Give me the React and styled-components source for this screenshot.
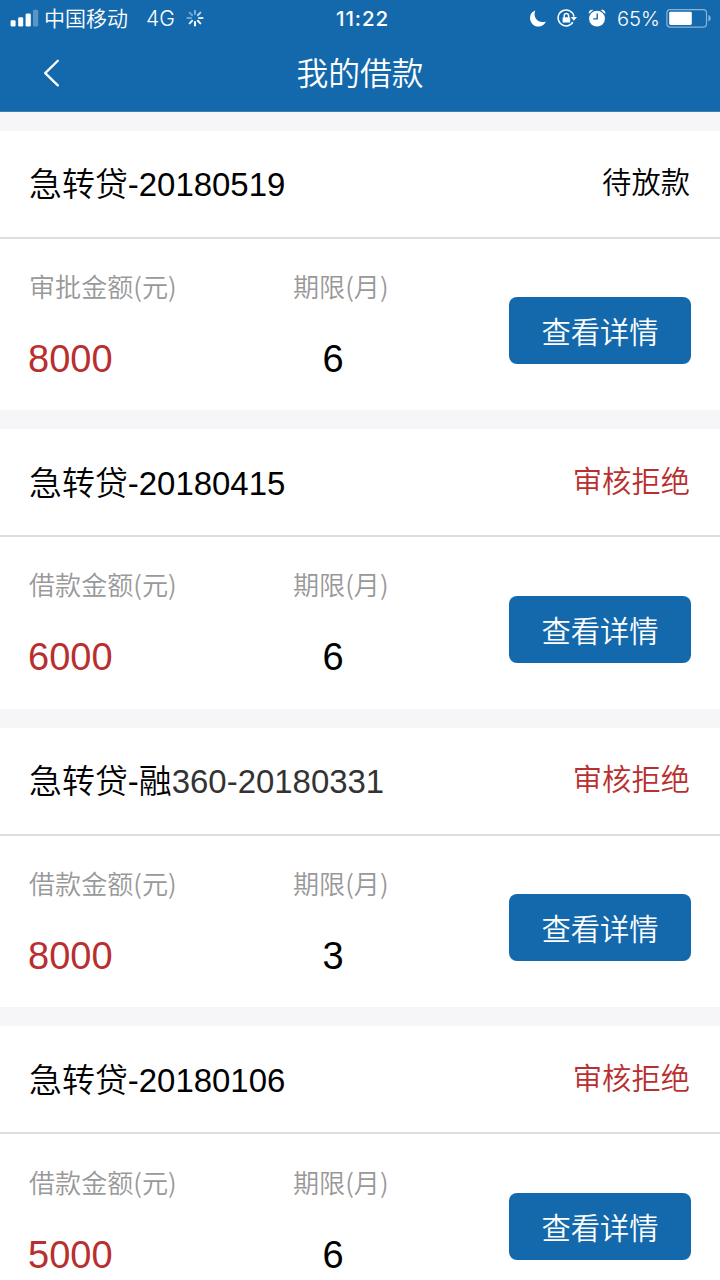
import React from "react";
import styled, { createGlobalStyle } from "styled-components";

const loans = [
  { id: 1, name: "急转贷-20180519", status: "待放款", amountLabel: "审批金额(元)", amount: 8000, months: 6 },
  { id: 2, name: "急转贷-20180415", status: "审核拒绝", rejected: true, amountLabel: "借款金额(元)", amount: 6000, months: 6 },
  { id: 3, name: "急转贷-融", suffix: "360-20180331", status: "审核拒绝", rejected: true, amountLabel: "借款金额(元)", amount: 8000, months: 3 },
  { id: 4, name: "急转贷-20180106", status: "审核拒绝", rejected: true, amountLabel: "借款金额(元)", amount: 5000, months: 6 },
];

const SignalIcon = () => (
  <svg width="30" height="20" viewBox="0 0 30 20" fill="#fff">
    <rect x="0.6" y="11.2" width="5" height="6.4" rx="1.4" />
    <rect x="8.2" y="8.2" width="5" height="9.4" rx="1.4" />
    <rect x="15.6" y="4.6" width="5.2" height="13" rx="1.4" />
    <rect x="23" y="0.8" width="5.2" height="16.8" rx="1.4" opacity="0.3" />
  </svg>
);

const spokes = [0.45, 0.7, 0.85, 0.95, 1, 0.9, 0.4, 0.4];

const SpinnerIcon = () => (
  <svg width="18" height="18" viewBox="-9 -8 18 18" stroke="#fff" strokeWidth="2" strokeLinecap="round">
    {spokes.map((opacity, i) => (
      <line key={i} x1="0" y1="-4" x2="0" y2="-7.6" opacity={opacity} transform={`rotate(${i * 45})`} />
    ))}
  </svg>
);

const MoonIcon = () => (
  <svg width="18" height="18" viewBox="0 0 18 18" fill="#fff">
    <path d="M6.4 0.6 C2.2 2 0.2 6.2 1.4 10.4 C2.8 15.2 7.8 17.8 12.2 16 C14.4 15.2 16 13.6 16.8 11.4 C13 12.8 8.8 11.6 6.8 8.4 C5.2 6 5.2 3 6.4 0.6 Z" />
  </svg>
);

const RotationLockIcon = () => (
  <svg width="20" height="20" viewBox="0 0 20 20" fill="none" stroke="#fff" strokeWidth="1.5">
    <path d="M15.9 13.2 A8 8 0 1 1 17 7.6" />
    <path d="M13.8 7.9 H20 L16.9 11.8 Z" fill="#fff" stroke="none" />
    <rect x="5.6" y="8.3" width="7.6" height="5.3" rx="0.7" fill="#fff" stroke="none" />
    <path d="M7.2 8.6 V6.7 A2.2 2.2 0 0 1 11.6 6.7 V8.6" />
  </svg>
);

const AlarmIcon = () => (
  <svg width="18" height="20" viewBox="0 0 18 20">
    <circle cx="9" cy="9.7" r="7.9" fill="#fff" />
    <path d="M0.8 4.9 C0.2 2.1 2.6 0.1 5.2 0.9 Z" fill="#fff" />
    <path d="M17.2 4.9 C17.8 2.1 15.4 0.1 12.8 0.9 Z" fill="#fff" />
    <path d="M9.2 4.4 V9.9 H5.2" fill="none" stroke="#1469ac" strokeWidth="1.4" />
  </svg>
);

const BatteryIcon = () => (
  <svg width="46" height="20" viewBox="0 0 46 20">
    <rect x="0.9" y="0.6" width="39.6" height="17.6" rx="3.4" fill="none" stroke="#fff" strokeOpacity="0.5" strokeWidth="1.2" />
    <rect x="3.2" y="2.8" width="22.6" height="13.2" rx="1.4" fill="#fff" />
    <path d="M42.4 6 C45.4 6.7 45.4 11.7 42.4 12.4 Z" fill="#fff" opacity="0.5" />
  </svg>
);

const BackIcon = () => (
  <svg width="18" height="28" viewBox="0 0 18 28" fill="none" stroke="#fff" strokeWidth="2.3" strokeLinecap="round" strokeLinejoin="round">
    <path d="M15.8 1.8 L3.2 14.1 L15.8 26.4" />
  </svg>
);

const LoanCard = ({ loan }) => (
  <Card>
    <CardHead>
      <LoanName>
        {loan.name}
        {loan.suffix && <Suffix>{loan.suffix}</Suffix>}
      </LoanName>
      <Status $rejected={loan.rejected}>{loan.status}</Status>
    </CardHead>
    <CardBody>
      <Field>
        <Label>{loan.amountLabel}</Label>
        <Amount>{loan.amount}</Amount>
      </Field>
      <Field>
        <Label>期限(月)</Label>
        <Months>{loan.months}</Months>
      </Field>
      <DetailBtn>查看详情</DetailBtn>
    </CardBody>
  </Card>
);

const App = () => (
  <Page>
    <GlobalStyle />
    <Header>
      <StatusBar>
        <StatusLeft>
          <SignalIcon />
          <Carrier>中国移动</Carrier>
          <Network>4G</Network>
          <SpinnerIcon />
        </StatusLeft>
        <Clock>11:22</Clock>
        <StatusRight>
          <MoonIcon />
          <RotationLockIcon />
          <AlarmIcon />
          <Percent>65%</Percent>
          <BatteryIcon />
        </StatusRight>
      </StatusBar>
      <NavBar>
        <BackBtn aria-label="返回">
          <BackIcon />
        </BackBtn>
        <NavTitle>我的借款</NavTitle>
      </NavBar>
    </Header>
    <List>
      {loans.map((loan) => (
        <LoanCard key={loan.id} loan={loan} />
      ))}
    </List>
  </Page>
);

export default App;

// ===== styles =====
const GlobalStyle = createGlobalStyle`
  * { box-sizing: border-box; }
  body { margin: 0; overflow: hidden; }
  button { border: 0; padding: 0; cursor: pointer; font-family: inherit; }
`;

const Page = styled.div`
  width: 720px;
  height: 1280px;
  overflow: hidden;
  background: #f6f6f9;
  color: #000;
  font-family: "Liberation Sans", "Noto Sans CJK SC", sans-serif;
  font-weight: 350;
`;

const Header = styled.header`
  height: 112px;
  background: #1469ac;
  border-bottom: 1px solid #3b80b5;
  color: #fff;
`;

const StatusBar = styled.div`
  height: 37px;
  display: grid;
  grid-template-columns: 1fr auto 1fr;
  align-items: center;
  padding: 0 8px 0 10px;
  font-family: Inter, "Noto Sans CJK SC", sans-serif;
`;

const StatusLeft = styled.div`
  display: flex;
  align-items: center;

  svg { flex: none; }
`;

const Carrier = styled.span`
  margin-left: 4px;
  font-size: 21px;
  line-height: 36px;
`;

const Network = styled.span`
  margin: 0 11px 0 18px;
  font-size: 21px;
  line-height: 36px;
`;

const Clock = styled.span`
  margin-left: 3px;
  font-size: 20.5px;
  line-height: 36px;
  font-weight: 550;
  letter-spacing: 0.9px;
`;

const StatusRight = styled.div`
  display: flex;
  align-items: center;
  justify-content: flex-end;

  svg { flex: none; margin-left: 11px; }
  svg:first-child { margin-right: -1px; }
  svg:last-child { margin-left: 6px; }
`;

const Percent = styled.span`
  margin-left: 11px;
  font-size: 20.2px;
  line-height: 36px;
`;

const NavBar = styled.div`
  height: 72px;
  display: grid;
  grid-template-columns: 120px 1fr 120px;
  align-items: center;
`;

const BackBtn = styled.button`
  width: 60px;
  height: 60px;
  margin-left: 42px;
  display: flex;
  align-items: center;
  background: none;
`;

const NavTitle = styled.h1`
  margin: 1px 0 0;
  text-align: center;
  font-size: 31.8px;
  line-height: 48px;
  font-weight: 350;
`;

const List = styled.main`
  padding-top: 18.6px;
  display: flex;
  flex-direction: column;
  gap: 18.9px;
`;

const Card = styled.section`
  height: 279.7px;
  flex: none;
  background: #fff;
`;

const CardHead = styled.div`
  height: 108px;
  display: flex;
  justify-content: space-between;
  align-items: flex-start;
  padding: 0 30px 0 29px;
  border-bottom: 2px solid #dedede;
`;

const LoanName = styled.h2`
  margin: 30.4px 0 0;
  font-size: 32.95px;
  line-height: 48px;
  font-weight: 350;
`;

const Suffix = styled.span`
  color: #333;
`;

const Status = styled.span`
  margin-top: 30.4px;
  font-size: 29.3px;
  line-height: 44px;
  color: ${({ $rejected }) => ($rejected ? "#b92f2f" : "#000")};
`;

const CardBody = styled.div`
  display: grid;
  grid-template-columns: 264px 1fr 182px;
  align-items: start;
  padding: 28.2px 29px 0;
`;

const Field = styled.div`
  display: flex;
  flex-direction: column;
`;

const Label = styled.span`
  font-family: "Noto Sans CJK SC", sans-serif;
  font-size: 26.1px;
  line-height: 38px;
  color: #999;
`;

const Value = styled.span`
  margin-top: 31px;
  font-size: 38px;
  line-height: 46px;
`;

const Amount = styled(Value)`
  margin-left: -1px;
  color: #b92f2f;
`;

const Months = styled(Value)`
  width: 80px;
  text-align: center;
`;

const DetailBtn = styled.button`
  width: 182px;
  height: 67px;
  margin-top: 30.2px;
  padding-top: 5px;
  border-radius: 8px;
  background: #1469ac;
  color: #fff;
  font-size: 29.3px;
  line-height: 44px;
  font-weight: 350;
`;
